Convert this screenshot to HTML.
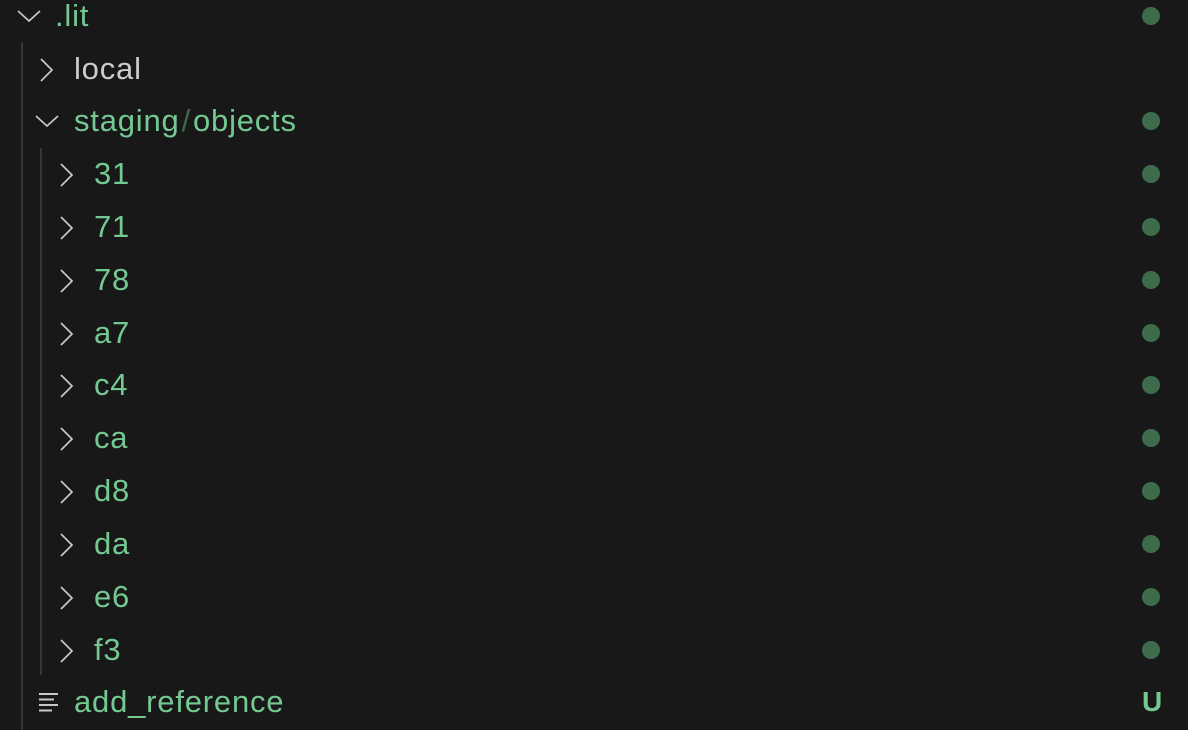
<!DOCTYPE html>
<html><head><style>
html,body{margin:0;padding:0;background:#181818;width:1188px;height:730px;overflow:hidden;position:relative;font-family:"Liberation Sans",sans-serif;}
.r{position:absolute;left:0;width:1188px;height:53px;line-height:53px;font-size:31px;letter-spacing:0.8px;color:#73c991;white-space:nowrap;}
.r span.t{position:absolute;top:-1px;}
.dot{position:absolute;left:1142px;top:17px;width:18px;height:18px;border-radius:50%;background:#3d6b4b;}
svg{position:absolute;}
.g{position:absolute;width:2px;background:#353535;}
</style></head><body>
<div class="g" style="left:21px;top:42px;height:688px"></div>
<div class="g" style="left:40px;top:148px;height:527px"></div>

<div class="r" style="top:-10px">
<svg style="left:16px;top:17px" width="26" height="18" viewBox="0 0 26 18"><path d="M2 4 L13 14 L24 4" fill="none" stroke="#c8c8c8" stroke-width="1.7"/></svg>
<span class="t" style="left:55px">.lit</span><div class="dot"></div></div>

<div class="r" style="top:43px">
<svg style="left:36px;top:14px" width="20" height="26" viewBox="0 0 20 26"><path d="M5 2 L16 13 L5 24" fill="none" stroke="#c8c8c8" stroke-width="1.7"/></svg>
<span class="t" style="left:74px;color:#cccccc">local</span></div>

<div class="r" style="top:95px">
<svg style="left:34px;top:17px" width="26" height="18" viewBox="0 0 26 18"><path d="M2 4 L13 14 L24 4" fill="none" stroke="#c8c8c8" stroke-width="1.7"/></svg>
<span class="t" style="left:74px">staging<span style="color:#3f6b4c;padding:0 2px">/</span>objects</span><div class="dot"></div></div>

<div class="r" style="top:148px"><svg style="left:56px;top:14px" width="20" height="26" viewBox="0 0 20 26"><path d="M5 2 L16 13 L5 24" fill="none" stroke="#c8c8c8" stroke-width="1.7"/></svg><span class="t" style="left:94px">31</span><div class="dot"></div></div>
<div class="r" style="top:201px"><svg style="left:56px;top:14px" width="20" height="26" viewBox="0 0 20 26"><path d="M5 2 L16 13 L5 24" fill="none" stroke="#c8c8c8" stroke-width="1.7"/></svg><span class="t" style="left:94px">71</span><div class="dot"></div></div>
<div class="r" style="top:254px"><svg style="left:56px;top:14px" width="20" height="26" viewBox="0 0 20 26"><path d="M5 2 L16 13 L5 24" fill="none" stroke="#c8c8c8" stroke-width="1.7"/></svg><span class="t" style="left:94px">78</span><div class="dot"></div></div>
<div class="r" style="top:307px"><svg style="left:56px;top:14px" width="20" height="26" viewBox="0 0 20 26"><path d="M5 2 L16 13 L5 24" fill="none" stroke="#c8c8c8" stroke-width="1.7"/></svg><span class="t" style="left:94px">a7</span><div class="dot"></div></div>
<div class="r" style="top:359px"><svg style="left:56px;top:14px" width="20" height="26" viewBox="0 0 20 26"><path d="M5 2 L16 13 L5 24" fill="none" stroke="#c8c8c8" stroke-width="1.7"/></svg><span class="t" style="left:94px">c4</span><div class="dot"></div></div>
<div class="r" style="top:412px"><svg style="left:56px;top:14px" width="20" height="26" viewBox="0 0 20 26"><path d="M5 2 L16 13 L5 24" fill="none" stroke="#c8c8c8" stroke-width="1.7"/></svg><span class="t" style="left:94px">ca</span><div class="dot"></div></div>
<div class="r" style="top:465px"><svg style="left:56px;top:14px" width="20" height="26" viewBox="0 0 20 26"><path d="M5 2 L16 13 L5 24" fill="none" stroke="#c8c8c8" stroke-width="1.7"/></svg><span class="t" style="left:94px">d8</span><div class="dot"></div></div>
<div class="r" style="top:518px"><svg style="left:56px;top:14px" width="20" height="26" viewBox="0 0 20 26"><path d="M5 2 L16 13 L5 24" fill="none" stroke="#c8c8c8" stroke-width="1.7"/></svg><span class="t" style="left:94px">da</span><div class="dot"></div></div>
<div class="r" style="top:571px"><svg style="left:56px;top:14px" width="20" height="26" viewBox="0 0 20 26"><path d="M5 2 L16 13 L5 24" fill="none" stroke="#c8c8c8" stroke-width="1.7"/></svg><span class="t" style="left:94px">e6</span><div class="dot"></div></div>
<div class="r" style="top:624px"><svg style="left:56px;top:14px" width="20" height="26" viewBox="0 0 20 26"><path d="M5 2 L16 13 L5 24" fill="none" stroke="#c8c8c8" stroke-width="1.7"/></svg><span class="t" style="left:94px">f3</span><div class="dot"></div></div>

<div class="r" style="top:676px">
<svg style="left:38px;top:16px" width="22" height="20" viewBox="0 0 22 20"><path d="M1 2 H20 M1 7.5 H16 M1 13 H20 M1 18.5 H14" fill="none" stroke="#c8c8c8" stroke-width="2"/></svg>
<span class="t" style="left:74px">add_reference</span>
<span class="t" style="left:1142px;font-size:28px;font-weight:bold">U</span></div>
</body></html>
